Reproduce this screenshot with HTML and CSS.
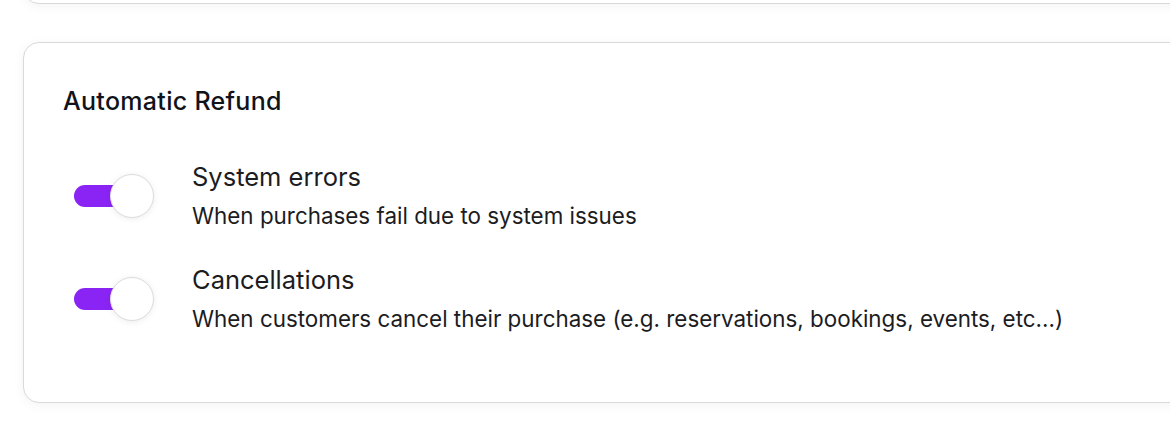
FILE: index.html
```html
<!DOCTYPE html>
<html>
<head>
<meta charset="utf-8">
<link rel="stylesheet" href="styles.css">
</head>
<body>
<div class="page">
  <div class="card card-prev"></div>
  <section class="card card-refund">
    <h2 class="card-title">Automatic Refund</h2>
    <div class="options">
      <div class="option">
        <div class="switch on" role="switch" aria-checked="true"><span class="track"></span><span class="knob"></span></div>
        <div class="option-text">
          <div class="option-title">System errors</div>
          <div class="option-desc">When purchases fail due to system issues</div>
        </div>
      </div>
      <div class="option">
        <div class="switch on" role="switch" aria-checked="true"><span class="track"></span><span class="knob"></span></div>
        <div class="option-text">
          <div class="option-title">Cancellations</div>
          <div class="option-desc">When customers cancel their purchase (e.g. reservations, bookings, events, etc...)</div>
        </div>
      </div>
    </div>
  </section>
</div>
</body>
</html>
```
FILE: styles.css
```css
* { box-sizing: border-box; }
html, body { margin: 0; padding: 0; background: #fff; }
body {
  font-family: Inter, "Noto Sans", sans-serif;
  color: #16171c;
  width: 1170px;
  height: 438px;
  overflow: hidden;
}
.page {
  display: flex;
  flex-direction: column;
  gap: 38px;
  padding-left: 23px;
  margin-top: -100px;
  width: 1220px;
}
.card {
  background: #fff;
  border: 1px solid #d9d9d9;
  border-radius: 16px;
  box-shadow: 0 2px 12px rgba(0,0,0,0.05);
}
.card-prev { height: 104px; }
.card-refund {
  height: 361px;
  padding: 44px 40px 0 39px;
}
.card-title {
  margin: 0;
  font-size: 25px;
  font-weight: 500;
  letter-spacing: 0.3px;
  line-height: 28px;
  color: #11131a;
}
.options {
  display: flex;
  flex-direction: column;
  gap: 35px;
  margin-top: 47px;
}
.option {
  display: flex;
  align-items: flex-start;
  gap: 37px;
}
.switch {
  position: relative;
  width: 92px;
  height: 44px;
  flex: none;
  margin-top: 12px;
}
.track {
  position: absolute;
  left: 11px;
  top: 11px;
  width: 60px;
  height: 22px;
  border-radius: 11px;
  background: #8a24f4;
}
.knob {
  position: absolute;
  left: 47px;
  top: 0;
  width: 44px;
  height: 44px;
  border-radius: 50%;
  background: #fff;
  border: 1px solid #dcdcdc;
  box-shadow: 0 1px 6px rgba(0,0,0,0.08);
}
.option-text { display: flex; flex-direction: column; gap: 10px; }
.option-title {
  font-size: 25.5px;
  line-height: 30px;
  color: #1c1c1f;
}
.option-desc {
  font-size: 22.4px;
  line-height: 28px;
  color: #1c1c1f;
}
```
